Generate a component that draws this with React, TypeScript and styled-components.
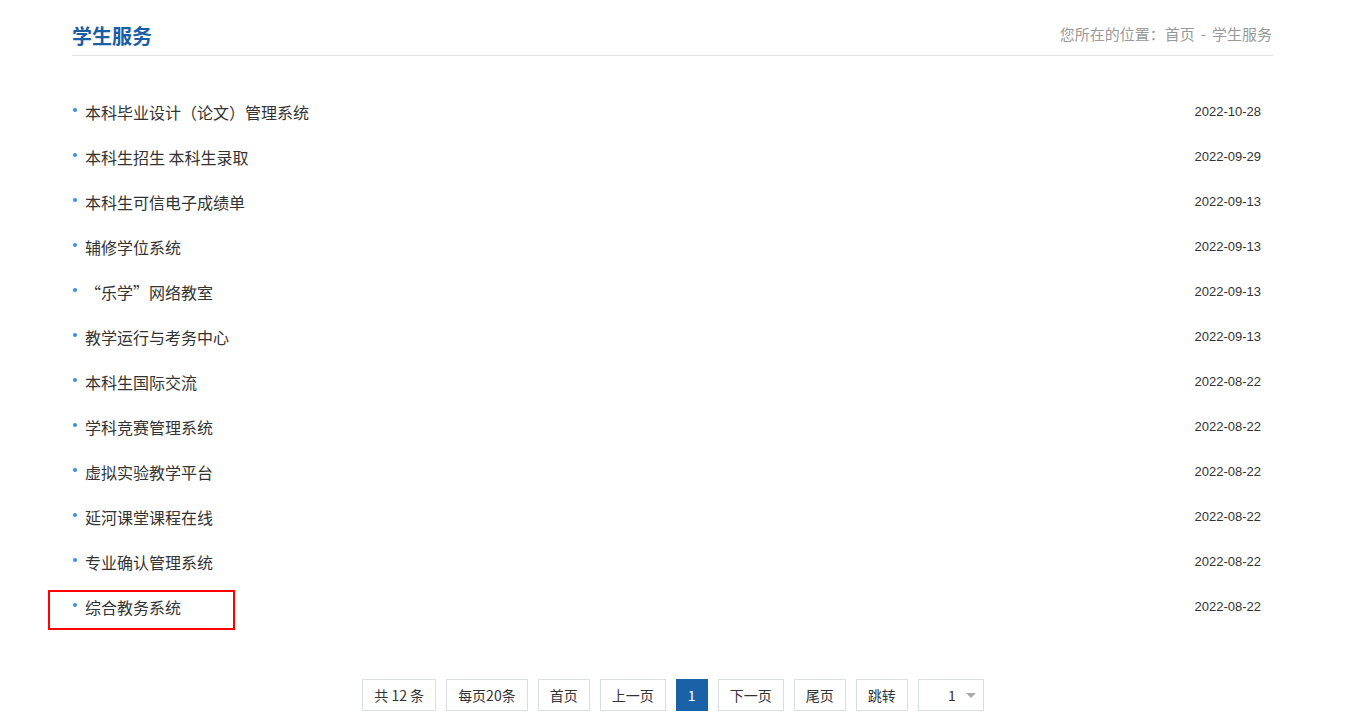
import React from "react"
import styled, { createGlobalStyle } from "styled-components"

const GlobalStyle = createGlobalStyle`
  body {
    margin: 0;
    background: #fff;
    font-family: "Microsoft YaHei", "Noto Sans CJK SC", "Liberation Sans", sans-serif;
    color: #333;
  }
`

const Container = styled.div`
  width: 1201px;
  margin: 0 0 0 72px;
  padding-top: 16px;
`

const Header = styled.div`
  display: flex;
  justify-content: space-between;
  align-items: center;
  height: 39px;
  border-bottom: 1px solid #e3e3e3;
`

const Title = styled.h2`
  margin: 0;
  font-size: 20px;
  font-weight: bold;
  color: #1a5ea6;
  line-height: 28px;
`

const Crumbs = styled.div`
  font-size: 15px;
  color: #999;
  padding: 0 1px 4px 0;
  span {
    margin: 0 6px;
  }
`

const List = styled.ul`
  list-style: none;
  margin: 33px 0 0;
  padding: 0;
`

const Row = styled.li`
  position: relative;
  display: flex;
  justify-content: space-between;
  align-items: center;
  height: 45px;
  padding-right: 12px;
`

const ItemLink = styled.a`
  display: flex;
  align-items: center;
  font-size: 16px;
  color: #333;
  text-decoration: none;
  &::before {
    content: "";
    width: 4px;
    height: 4px;
    border-radius: 50%;
    background: #3d8fdc;
    margin: 0 8px 4px 1px;
  }
`

const DateText = styled.span`
  font-size: 13px;
  color: #333;
  font-family: "Liberation Sans", Arial, sans-serif;
`

const Highlight = styled.div`
  position: absolute;
  left: -24px;
  top: 6px;
  width: 183px;
  height: 36px;
  border: 2px solid #f00;
  pointer-events: none;
`

const Pager = styled.div`
  display: flex;
  justify-content: center;
  gap: 10px;
  margin-top: 50px;
  padding-left: 1px;
`

const PageBtn = styled.span<{ $active?: boolean }>`
  box-sizing: border-box;
  display: flex;
  align-items: center;
  justify-content: center;
  height: 32px;
  padding: 0 11px;
  min-width: 32px;
  font-size: 14px;
  border: 1px solid ${(p) => (p.$active ? "#1a62a8" : "#d9dfe0")};
  background: ${(p) => (p.$active ? "#1a62a8" : "#fff")};
  color: ${(p) => (p.$active ? "#fff" : "#333")};
`

const Select = styled.span`
  box-sizing: border-box;
  display: flex;
  align-items: center;
  justify-content: flex-end;
  gap: 10px;
  width: 66px;
  height: 32px;
  padding-right: 7px;
  font-size: 14px;
  border: 1px solid #d9dfe0;
  color: #333;
  &::after {
    content: "";
    border-left: 5px solid transparent;
    border-right: 5px solid transparent;
    border-top: 5px solid #aaa;
  }
`

const items = [
  ["本科毕业设计（论文）管理系统", "2022-10-28"],
  ["本科生招生 本科生录取", "2022-09-29"],
  ["本科生可信电子成绩单", "2022-09-13"],
  ["辅修学位系统", "2022-09-13"],
  ["“乐学”网络教室", "2022-09-13"],
  ["教学运行与考务中心", "2022-09-13"],
  ["本科生国际交流", "2022-08-22"],
  ["学科竞赛管理系统", "2022-08-22"],
  ["虚拟实验教学平台", "2022-08-22"],
  ["延河课堂课程在线", "2022-08-22"],
  ["专业确认管理系统", "2022-08-22"],
  ["综合教务系统", "2022-08-22"],
]

export default function App() {
  return (
    <>
      <GlobalStyle />
      <Container>
        <Header>
          <Title>学生服务</Title>
          <Crumbs>
            您所在的位置：首页<span>-</span>学生服务
          </Crumbs>
        </Header>
        <List>
          {items.map(([name, date], i) => (
            <Row key={name}>
              <ItemLink href="#">{name}</ItemLink>
              <DateText>{date}</DateText>
              {i === items.length - 1 && <Highlight />}
            </Row>
          ))}
        </List>
        <Pager>
          <PageBtn>共 12 条</PageBtn>
          <PageBtn>每页20条</PageBtn>
          <PageBtn>首页</PageBtn>
          <PageBtn>上一页</PageBtn>
          <PageBtn $active>1</PageBtn>
          <PageBtn>下一页</PageBtn>
          <PageBtn>尾页</PageBtn>
          <PageBtn>跳转</PageBtn>
          <Select>1</Select>
        </Pager>
      </Container>
    </>
  )
}
